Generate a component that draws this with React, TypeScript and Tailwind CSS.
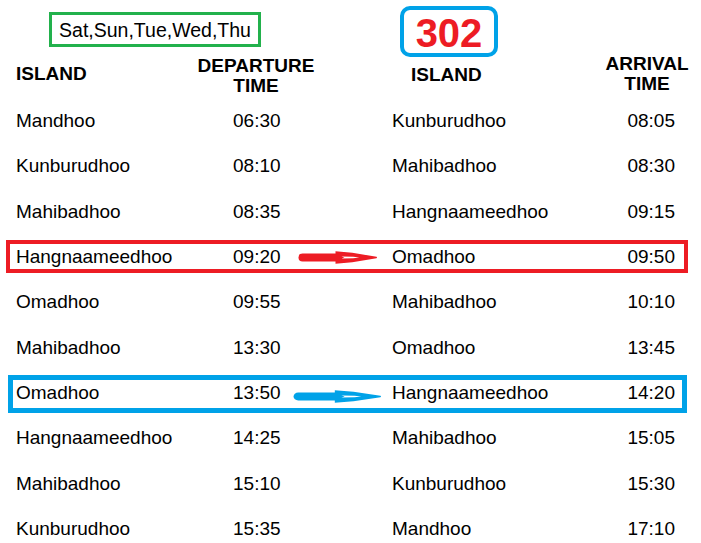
import React from 'react';

type Row = {
  from: string;
  dep: string;
  to: string;
  arr: string;
  mark?: 'red' | 'blue';
};

const rows: Row[] = [
  { from: 'Mandhoo', dep: '06:30', to: 'Kunburudhoo', arr: '08:05' },
  { from: 'Kunburudhoo', dep: '08:10', to: 'Mahibadhoo', arr: '08:30' },
  { from: 'Mahibadhoo', dep: '08:35', to: 'Hangnaameedhoo', arr: '09:15' },
  { from: 'Hangnaameedhoo', dep: '09:20', to: 'Omadhoo', arr: '09:50', mark: 'red' },
  { from: 'Omadhoo', dep: '09:55', to: 'Mahibadhoo', arr: '10:10' },
  { from: 'Mahibadhoo', dep: '13:30', to: 'Omadhoo', arr: '13:45' },
  { from: 'Omadhoo', dep: '13:50', to: 'Hangnaameedhoo', arr: '14:20', mark: 'blue' },
  { from: 'Hangnaameedhoo', dep: '14:25', to: 'Mahibadhoo', arr: '15:05' },
  { from: 'Mahibadhoo', dep: '15:10', to: 'Kunburudhoo', arr: '15:30' },
  { from: 'Kunburudhoo', dep: '15:35', to: 'Mandhoo', arr: '17:10' },
];

// hand-drawn looking arrow, bar + hollow tip
const Arrow = ({ color, className }: { color: string; className: string }) => (
  <svg viewBox="0 0 80 14" preserveAspectRatio="none" className={className}>
    <rect x="0.5" y="2.8" width="44" height="8.4" rx="4.2" fill={color} />
    <path d="M38 0.3 L55 1.8 L79.5 6.3 Q80.5 7 79.5 7.7 L55 12.2 L38 13.7 Z" fill={color} />
    <path d="M44 5.8 L56 6.1 L62 7 L56 7.9 L44 8.2 L47 7 Z" fill="#fff" />
  </svg>
);

export default function App() {
  return (
    <div className="w-[701px] h-[543px] bg-white text-black overflow-hidden font-['Liberation_Sans',Arial,sans-serif]">
      {/* Days + route number */}
      <div className="h-[50px] flex items-start">
        <div className="ml-[49px] mt-[12px] w-[212px] h-[35px] shrink-0 border-[3px] border-[#22b14c] flex items-center justify-center text-[19.5px] leading-[20px]">
          Sat,Sun,Tue,Wed,Thu
        </div>
        <div className="ml-[139px] mt-[6px] w-[98px] h-[51px] shrink-0 border-4 border-[#00a2e8] rounded-[10px] flex items-center justify-center pt-[3px] text-[40px] leading-[40px] font-bold text-[#ed1c24]">
          302
        </div>
      </div>

      {/* Column headings */}
      <div className="h-[48px] flex items-start font-bold text-[19px] leading-[20px]">
        <div className="w-[176px] pl-[16px] pt-[14px]">ISLAND</div>
        <div className="w-[160px] pt-[6px] text-center">
          DEPARTURE
          <br />
          TIME
        </div>
        <div className="w-[261px] pl-[75px] pt-[15px]">ISLAND</div>
        <div className="w-[100px] pt-[4px] text-center">
          ARRIVAL
          <br />
          TIME
        </div>
      </div>

      {/* Timetable */}
      <div className="flex flex-col text-[19px] leading-[19px]">
        {rows.map((r, i) => (
          <div key={i} className="relative h-[45.33px] flex items-center pl-[16px]">
            {r.mark === 'red' && (
              <div className="absolute left-[6px] top-[6px] w-[682px] h-[33px] border-4 border-[#ed1c24]" />
            )}
            {r.mark === 'blue' && (
              <div className="absolute left-[8px] top-[5px] w-[679px] h-[38px] border-[5px] border-[#00a2e8]" />
            )}
            <span className="w-[217px] shrink-0">{r.from}</span>
            <div className="w-[159px] shrink-0 flex items-center">
              <span className={r.mark === 'blue' ? 'w-[60px] shrink-0' : 'w-[65px] shrink-0'}>{r.dep}</span>
              {r.mark === 'red' && <Arrow color="#ed1c24" className="w-[79px] h-[13px] mt-[1px]" />}
              {r.mark === 'blue' && <Arrow color="#00a2e8" className="w-[88px] h-[13px] mt-[7px]" />}
            </div>
            <span className="w-[200px] shrink-0">{r.to}</span>
            <span className="w-[83px] shrink-0 text-right">{r.arr}</span>
          </div>
        ))}
      </div>
    </div>
  );
}
